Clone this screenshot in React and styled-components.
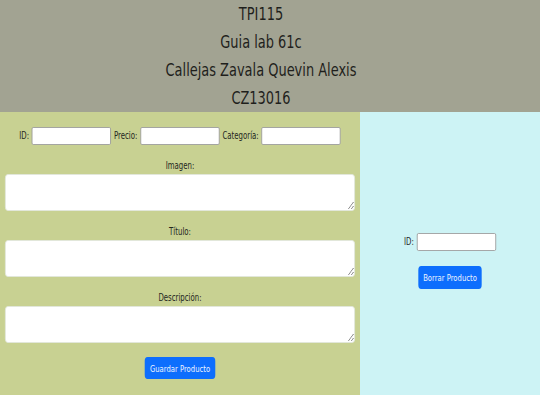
import React from "react";
import styled, { createGlobalStyle } from "styled-components";

const Global = createGlobalStyle`
  html, body { margin: 0; padding: 0; overflow: hidden; background: #ffffff; }
  body { font-family: "DejaVu Sans", Verdana, sans-serif; color: #212529; }
  * { box-sizing: border-box; }
`;

/* The reference is a horizontally squeezed capture: the page is laid out
   at 750px wide and squeezed to the 540px window. */
const Page = styled.div`
  width: 750px;
  transform: scaleX(0.72);
  transform-origin: 0 0;
`;

const Header = styled.header`
  background: #a2a392;
  padding-right: 25px;
  display: flex;
  flex-direction: column;
  align-items: center;
`;

const HeaderLine = styled.div`
  font-size: 18px;
  line-height: 28px;
  color: #1f1f1c;
`;

const Main = styled.main`
  display: grid;
  grid-template-columns: 2fr 1fr;
`;

const FormPanel = styled.section`
  background: #c8d192;
  padding: 15px 7px 16px;
  display: flex;
  flex-direction: column;
  align-items: stretch;
  gap: 14px;
`;

const DeletePanel = styled.section`
  background: #cdf3f5;
  padding-top: 14px;
  display: flex;
  flex-direction: column;
  align-items: center;
  justify-content: center;
  gap: 15px;
`;

const InlineRow = styled.div`
  display: flex;
  justify-content: center;
  align-items: center;
  gap: 4px;
  height: 18px;
`;

const Label = styled.label`
  font-size: 9.7px;
  line-height: 14px;
  color: #23261d;
  white-space: nowrap;
`;

const TextInput = styled.input`
  width: 110px;
  height: 18px;
  padding: 1px 3px;
  border: 1px solid #9a9a9a;
  border-radius: 2px;
  background: #ffffff;
  font-family: inherit;
  font-size: 9.5px;
`;

const Field = styled.div`
  display: flex;
  flex-direction: column;
  align-items: center;
  gap: 1px;
`;

const TextArea = styled.textarea`
  width: 100%;
  height: 37px;
  border: 1px solid #e2e6dc;
  border-radius: 4px;
  background: #ffffff;
  resize: vertical;
  font-family: inherit;
  font-size: 9.5px;
  padding: 3px 6px;
  display: block;
`;

const Button = styled.button`
  align-self: center;
  height: ${(p) => p.$h}px;
  padding: 0 7px;
  border: none;
  border-radius: 4px;
  background: #0d6efd;
  color: #eef4ff;
  font-family: inherit;
  font-size: 9.5px;
  cursor: pointer;
`;

function TextField({ label, id }) {
  return (
    <Field>
      <Label htmlFor={id}>{label}</Label>
      <TextArea id={id} />
    </Field>
  );
}

export default function App() {
  return (
    <>
      <Global />
      <Page>
        <Header>
          <HeaderLine>TPI115</HeaderLine>
          <HeaderLine>Guia lab 61c</HeaderLine>
          <HeaderLine>Callejas Zavala Quevin Alexis</HeaderLine>
          <HeaderLine>CZ13016</HeaderLine>
        </Header>
        <Main>
          <FormPanel>
            <InlineRow>
              <Label htmlFor="id">ID:</Label>
              <TextInput id="id" type="text" />
              <Label htmlFor="precio">Precio:</Label>
              <TextInput id="precio" type="text" />
              <Label htmlFor="categoria">Categoría:</Label>
              <TextInput id="categoria" type="text" />
            </InlineRow>
            <TextField label="Imagen:" id="imagen" />
            <TextField label="Título:" id="titulo" />
            <TextField label="Descripción:" id="descripcion" />
            <Button $h={22}>Guardar Producto</Button>
          </FormPanel>
          <DeletePanel>
            <InlineRow>
              <Label htmlFor="borrar-id">ID:</Label>
              <TextInput id="borrar-id" type="text" />
            </InlineRow>
            <Button $h={23}>Borrar Producto</Button>
          </DeletePanel>
        </Main>
      </Page>
    </>
  );
}
